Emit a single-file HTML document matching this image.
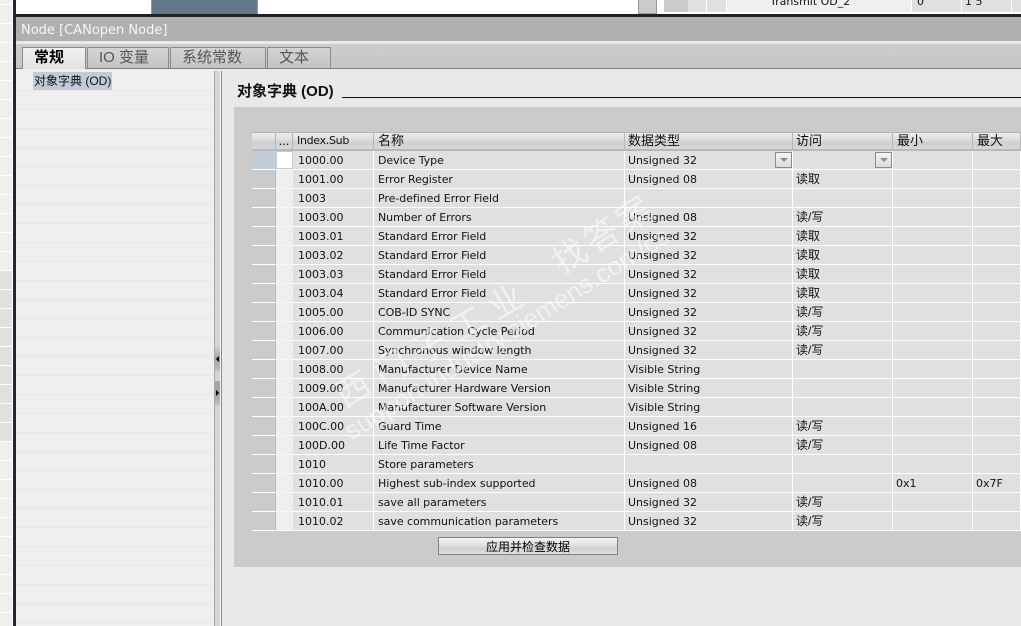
<!DOCTYPE html>
<html><head><meta charset="utf-8">
<style>
html,body{margin:0;padding:0;background:#e9e9e9}
#p{position:relative;width:1021px;height:626px;overflow:hidden;background:#e9e9e9;font-family:"DejaVu Sans","Noto Sans CJK SC",sans-serif;font-size:11px;color:#111}
.a{position:absolute}
.cj{font-family:"Liberation Sans","Noto Sans CJK SC",sans-serif}
table{position:absolute;left:252px;top:132px;width:769px;border-collapse:separate;border-spacing:0;table-layout:fixed}
td,th{padding:0;white-space:nowrap;overflow:hidden;font-weight:normal;text-align:left;height:17px;padding-top:1px;line-height:17px;border-bottom:1px solid #fff;border-right:1px solid #fff;background:#e0e0e0;font-size:11px;box-sizing:content-box}
th{background:linear-gradient(#ededed,#dcdcdc 45%,#d0d0d0 60%,#d8d8d8);border-top:1px solid #b4b4b4;border-bottom:2px solid #b8b8b8;border-right:1px solid #b8b8b8;height:16px;padding-top:0;line-height:16px;font-family:"Liberation Sans","Noto Sans CJK SC",sans-serif;font-size:13px;padding-left:4px}
td.g{background:#cbcbcb;border-right:1px solid #bcbcbc}
td.l{background:#efefef;border-right:0;border-bottom:1px solid #f8f8f8}
td.i{padding-left:5px}
td.n{padding-left:4px;letter-spacing:-.05px}
td.t{padding-left:3px}
td.z{padding-left:3px;font-family:"Liberation Sans","Noto Sans CJK SC",sans-serif;font-size:12px}
.tab{position:absolute;top:47px;height:21px;box-sizing:border-box;border:1px solid #8a8a8a;border-bottom:0;background:linear-gradient(#d4d4d4,#c4c4c4);padding-left:11px;line-height:20px;font-size:15px;color:#555;white-space:nowrap;font-family:"Liberation Sans","Noto Sans CJK SC",sans-serif}
.sl{position:absolute;left:0;width:12px;height:18px;background:#efefef}
.sd{background:#e0e0e0}
.dd{position:absolute;width:17px;height:16px;box-sizing:border-box;border:1px solid #8a8a8a;background:linear-gradient(#f4f4f4,#dcdcdc)}
.dd:after{content:"";position:absolute;left:4px;top:5px;border-left:4px solid transparent;border-right:4px solid transparent;border-top:4px solid #8a8a8a}
.pl{position:absolute;left:16px;width:198px;height:1px;background:#e8e8e8}
.wm{position:absolute;color:rgba(255,255,255,.55);white-space:nowrap;transform-origin:0 0;line-height:0}
</style></head><body><div id="p">

<!-- left strip -->
<div class="a" style="left:0;top:0;width:13px;height:626px;background:#fff"></div>
<div class="sl" style="top:-14px"></div><div class="sl" style="top:5px"></div><div class="sl" style="top:24px"></div><div class="sl" style="top:43px"></div><div class="sl" style="top:62px"></div><div class="sl" style="top:81px"></div><div class="sl" style="top:100px"></div><div class="sl" style="top:119px"></div><div class="sl" style="top:138px"></div><div class="sl" style="top:157px"></div><div class="sl" style="top:176px"></div><div class="sl" style="top:195px"></div><div class="sl" style="top:214px"></div><div class="sl" style="top:233px"></div><div class="sl" style="top:252px"></div>
<div class="sl sd" style="top:271px"></div><div class="sl sd" style="top:290px"></div><div class="sl sd" style="top:309px"></div><div class="sl sd" style="top:328px"></div><div class="sl sd" style="top:347px"></div><div class="sl sd" style="top:366px"></div><div class="sl sd" style="top:385px"></div><div class="sl sd" style="top:404px"></div><div class="sl sd" style="top:423px"></div>
<div class="sl" style="top:442px"></div><div class="sl" style="top:461px"></div><div class="sl" style="top:480px"></div><div class="sl" style="top:499px"></div><div class="sl" style="top:518px"></div><div class="sl" style="top:537px"></div><div class="sl" style="top:556px"></div><div class="sl" style="top:575px"></div><div class="sl" style="top:594px"></div><div class="sl" style="top:613px"></div>
<div class="a" style="left:13px;top:0;width:3px;height:626px;background:#1f2638"></div>

<!-- top background window -->
<div class="a" style="left:16px;top:0;width:1005px;height:14px;background:#fff"></div>
<div class="a" style="left:151px;top:0;width:107px;height:14px;background:#64788a;border-left:1px solid #8c9cab;border-right:1px solid #8c9cab;box-sizing:border-box"></div>
<div class="a" style="left:638px;top:0;width:19px;height:14px;background:#cbcbcb;border:1px solid #999;border-top:0;box-sizing:border-box"></div>
<div class="a" style="left:664px;top:0;width:24px;height:12px;background:#cbcbcb"></div>
<div class="a" style="left:688px;top:0;width:18px;height:12px;background:#e0e0e0"></div>
<div class="a" style="left:707px;top:0;width:19px;height:12px;background:#e0e0e0"></div>
<div class="a" style="left:727px;top:0;width:184px;height:12px;background:#efefef"></div>
<div class="a" style="left:912px;top:0;width:49px;height:12px;background:#e0e0e0"></div>
<div class="a" style="left:962px;top:0;width:49px;height:12px;background:#e0e0e0"></div>
<div class="a" style="left:1012px;top:0;width:9px;height:12px;background:#e0e0e0"></div>
<div class="a" style="left:770px;top:-5px;line-height:14px">Transmit OD_2</div>
<div class="a" style="left:917px;top:-5px;line-height:14px">0</div>
<div class="a" style="left:965px;top:-5px;line-height:14px">1 5</div>
<div class="a" style="left:16px;top:14px;width:1005px;height:3px;background:#222"></div>

<!-- title bar -->
<div class="a" style="left:16px;top:17px;width:1005px;height:24px;background:#b0b0b0;color:#f6f6f6;font-size:13px;line-height:27px;padding-left:5px;box-sizing:border-box;white-space:nowrap;overflow:hidden">Node [CANopen Node]</div>
<div class="a" style="left:16px;top:41px;width:1005px;height:3px;background:#e9e9e9"></div>
<div class="a" style="left:16px;top:44px;width:1005px;height:24px;background:linear-gradient(#cdcdcd,#c6c6c6)"></div>
<div class="a" style="left:16px;top:68px;width:1005px;height:1px;background:#7f7f7f"></div>

<!-- tabs -->
<div class="tab" style="left:22px;width:64px;height:22px;background:linear-gradient(#f0f0f0,#e2e2e2);color:#000;font-weight:bold;z-index:2">常规</div>
<div class="tab" style="left:87px;width:82px">IO 变量</div>
<div class="tab" style="left:170px;width:96px">系统常数</div>
<div class="tab" style="left:267px;width:64px">文本</div>

<!-- left nav -->
<div class="a" style="left:16px;top:69px;width:198px;height:557px;background:#efefef"></div>
<div class="pl" style="top:90px"></div><div class="pl" style="top:109px"></div><div class="pl" style="top:128px"></div><div class="pl" style="top:147px"></div><div class="pl" style="top:166px"></div><div class="pl" style="top:185px"></div><div class="pl" style="top:204px"></div><div class="pl" style="top:223px"></div><div class="pl" style="top:242px"></div><div class="pl" style="top:261px"></div><div class="pl" style="top:280px"></div><div class="pl" style="top:299px"></div><div class="pl" style="top:318px"></div><div class="pl" style="top:337px"></div><div class="pl" style="top:356px"></div><div class="pl" style="top:375px"></div><div class="pl" style="top:394px"></div><div class="pl" style="top:413px"></div><div class="pl" style="top:432px"></div><div class="pl" style="top:451px"></div><div class="pl" style="top:470px"></div><div class="pl" style="top:489px"></div><div class="pl" style="top:508px"></div><div class="pl" style="top:527px"></div><div class="pl" style="top:546px"></div><div class="pl" style="top:565px"></div><div class="pl" style="top:584px"></div><div class="pl" style="top:603px"></div><div class="pl" style="top:622px"></div>
<div class="a cj" style="left:33px;top:72px;width:79px;height:18px;line-height:19px;background:#c0ccd8;font-size:12px;white-space:nowrap;padding-left:1px;box-sizing:border-box">对象字典 (OD)</div>

<!-- splitter -->
<div class="a" style="left:214px;top:71px;width:8px;height:555px;background:#d4d4d4;border-left:1px solid #a8a8a8;border-right:1px solid #8c8c8c;box-sizing:border-box"></div>
<div class="a" style="left:220px;top:71px;width:1px;height:555px;background:#f4f4f4"></div>
<div class="a" style="left:215px;top:347px;width:5px;height:24px;background:linear-gradient(#d0d0d0,#a0a0a0 50%,#c0c0c0)"></div>
<div class="a" style="left:215px;top:381px;width:5px;height:24px;background:linear-gradient(#a8a8a8,#a0a0a0 50%,#c0c0c0)"></div>
<div class="a" style="left:216px;top:356px;border-top:3px solid transparent;border-bottom:3px solid transparent;border-right:3px solid #000"></div>
<div class="a" style="left:216px;top:390px;border-top:3px solid transparent;border-bottom:3px solid transparent;border-left:3px solid #000"></div>

<!-- heading -->
<div class="a cj" style="left:237px;top:83px;font-size:15px;line-height:18px;font-weight:bold;color:#111;white-space:nowrap">对象字典 (OD)</div>
<div class="a" style="left:342px;top:97px;width:679px;height:1px;background:#111"></div>

<!-- panel -->
<div class="a" style="left:234px;top:107px;width:787px;height:460px;background:#cbcbcb"></div>

<table>
<colgroup><col style="width:24px"><col style="width:17px"><col style="width:81px"><col style="width:251px"><col style="width:168px"><col style="width:100px"><col style="width:80px"><col style="width:48px"></colgroup>
<tr><th></th><th style="text-align:center;padding:0">...</th><th style="font-family:'DejaVu Sans',sans-serif;font-size:11px;letter-spacing:-.3px">Index.Sub</th><th>名称</th><th style="padding-left:3px">数据类型</th><th style="padding-left:3px">访问</th><th>最小</th><th>最大</th></tr>
<tr><td class="g" style="background:#c0ccd8;border-right:1px solid #c0ccd8"></td><td class="l" style="background:#fff;box-shadow:inset 0 0 0 1px #c0ccd8"></td><td class="i">1000.00</td><td class="n">Device Type</td><td class="t">Unsigned 32</td><td></td><td></td><td></td></tr>
<tr><td class="g"></td><td class="l"></td><td class="i">1001.00</td><td class="n">Error Register</td><td class="t">Unsigned 08</td><td class="z">读取</td><td></td><td></td></tr>
<tr><td class="g"></td><td class="l"></td><td class="i">1003</td><td class="n">Pre-defined Error Field</td><td class="t"></td><td></td><td></td><td></td></tr>
<tr><td class="g"></td><td class="l"></td><td class="i">1003.00</td><td class="n">Number of Errors</td><td class="t">Unsigned 08</td><td class="z">读/写</td><td></td><td></td></tr>
<tr><td class="g"></td><td class="l"></td><td class="i">1003.01</td><td class="n">Standard Error Field</td><td class="t">Unsigned 32</td><td class="z">读取</td><td></td><td></td></tr>
<tr><td class="g"></td><td class="l"></td><td class="i">1003.02</td><td class="n">Standard Error Field</td><td class="t">Unsigned 32</td><td class="z">读取</td><td></td><td></td></tr>
<tr><td class="g"></td><td class="l"></td><td class="i">1003.03</td><td class="n">Standard Error Field</td><td class="t">Unsigned 32</td><td class="z">读取</td><td></td><td></td></tr>
<tr><td class="g"></td><td class="l"></td><td class="i">1003.04</td><td class="n">Standard Error Field</td><td class="t">Unsigned 32</td><td class="z">读取</td><td></td><td></td></tr>
<tr><td class="g"></td><td class="l"></td><td class="i">1005.00</td><td class="n">COB-ID SYNC</td><td class="t">Unsigned 32</td><td class="z">读/写</td><td></td><td></td></tr>
<tr><td class="g"></td><td class="l"></td><td class="i">1006.00</td><td class="n">Communication Cycle Period</td><td class="t">Unsigned 32</td><td class="z">读/写</td><td></td><td></td></tr>
<tr><td class="g"></td><td class="l"></td><td class="i">1007.00</td><td class="n">Synchronous window length</td><td class="t">Unsigned 32</td><td class="z">读/写</td><td></td><td></td></tr>
<tr><td class="g"></td><td class="l"></td><td class="i">1008.00</td><td class="n">Manufacturer Device Name</td><td class="t">Visible String</td><td></td><td></td><td></td></tr>
<tr><td class="g"></td><td class="l"></td><td class="i">1009.00</td><td class="n">Manufacturer Hardware Version</td><td class="t">Visible String</td><td></td><td></td><td></td></tr>
<tr><td class="g"></td><td class="l"></td><td class="i">100A.00</td><td class="n">Manufacturer Software Version</td><td class="t">Visible String</td><td></td><td></td><td></td></tr>
<tr><td class="g"></td><td class="l"></td><td class="i">100C.00</td><td class="n">Guard Time</td><td class="t">Unsigned 16</td><td class="z">读/写</td><td></td><td></td></tr>
<tr><td class="g"></td><td class="l"></td><td class="i">100D.00</td><td class="n">Life Time Factor</td><td class="t">Unsigned 08</td><td class="z">读/写</td><td></td><td></td></tr>
<tr><td class="g"></td><td class="l"></td><td class="i">1010</td><td class="n">Store parameters</td><td class="t"></td><td></td><td></td><td></td></tr>
<tr><td class="g"></td><td class="l"></td><td class="i">1010.00</td><td class="n">Highest sub-index supported</td><td class="t">Unsigned 08</td><td></td><td class="t">0x1</td><td class="t">0x7F</td></tr>
<tr><td class="g"></td><td class="l"></td><td class="i">1010.01</td><td class="n">save all parameters</td><td class="t">Unsigned 32</td><td class="z">读/写</td><td></td><td></td></tr>
<tr><td class="g"></td><td class="l"></td><td class="i">1010.02</td><td class="n">save communication parameters</td><td class="t">Unsigned 32</td><td class="z">读/写</td><td></td><td></td></tr>
</table>

<div class="dd" style="left:775px;top:152px"></div>
<div class="dd" style="left:875px;top:152px"></div>

<!-- button -->
<div class="a cj" style="left:438px;top:537px;width:180px;height:18px;box-sizing:border-box;border:1px solid #7f7f7f;border-radius:1px;background:linear-gradient(#f4f4f4,#e0e0e0 45%,#cfcfcf 65%,#e2e2e2);text-align:center;font-size:12px;line-height:18px;color:#000">应用并检查数据</div>

<!-- watermark -->
<div class="wm cj" style="left:339px;top:399px;font-size:34px;letter-spacing:10px;transform:rotate(-30deg)">西门子工业</div>
<div class="wm cj" style="left:556px;top:266px;font-size:34px;letter-spacing:4px;transform:rotate(-33deg)">找答案</div>
<div class="wm" style="left:347px;top:433px;font-size:26px;font-family:'Liberation Sans',sans-serif;transform:rotate(-32deg)">support.industry.siemens.com/cs</div>

</div></body></html>
